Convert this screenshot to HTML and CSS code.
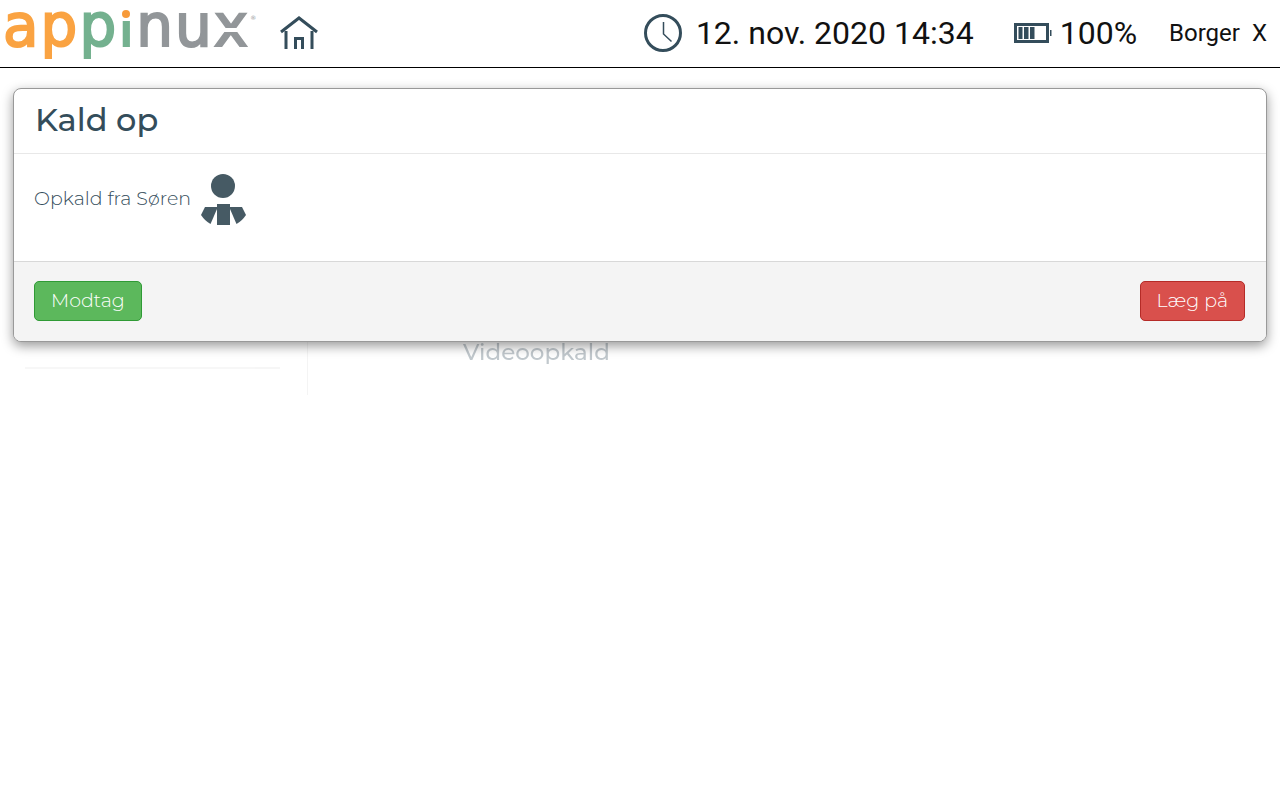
FILE: index.html
```html
<!DOCTYPE html>
<html lang="da">
<head>
  <meta charset="UTF-8">
  <meta name="viewport" content="width=device-width, initial-scale=1">
  <title>Appinux</title>
  <link rel="stylesheet" href="styles.css">
</head>
<body>
  <header class="topbar">
    <a class="logo" href="#"><span class="orange">a</span><span class="orange">p</span><span class="green">p</span><span class="dotted">i</span><span class="gray">n</span><span class="gray">u</span><span class="gray split">x</span><sup>®</sup></a>
    <a class="home" href="#" aria-label="Hjem">
      <svg width="38" height="34" viewBox="0 0 38 34" fill="none" stroke="#344d5b" stroke-width="3">
        <path d="M1 16 19 2l18 14"/>
        <path d="M6 15v18M32 15v18"/>
        <path d="M15.500 33V22.500h7V33"/>
      </svg>
    </a>

    <div class="status clock">
      <svg width="38" height="38" viewBox="0 0 38 38" fill="none" stroke="#344d5b">
        <circle cx="19" cy="19" r="17.500" stroke-width="3"/>
        <path d="M19.500 8v12l8 7.500" stroke-width="1.500"/>
      </svg>
      <time datetime="2020-11-12T14:34">12. nov. 2020 14:34</time>
    </div>

    <div class="status battery">
      <svg width="38" height="20" viewBox="0 0 38 20">
        <path d="M0 0h35v20H0zM3 3v14h29V3z" fill="#344d5b" fill-rule="evenodd"/>
        <path d="M4.500 4h4v12h-4zM10 4h4.500v12H10zM16 4h4.500v12H16zM36 7h1.500v6H36z" fill="#344d5b"/>
      </svg>
      <span>100%</span>
    </div>

    <div class="user">
      <span>Borger</span>
      <button class="logout" type="button" aria-label="Log ud">X</button>
    </div>
  </header>

  <main class="stage">
    <div class="page">
      <aside class="sidebar"><hr></aside>
      <section class="content">
        <h2>Videoopkald</h2>
      </section>
    </div>

    <div class="modal" role="dialog" aria-labelledby="callTitle">
      <div class="modal-header">
        <h1 id="callTitle">Kald op</h1>
      </div>
      <div class="modal-body">
        <span>Opkald fra Søren</span>
        <svg width="46" height="52" viewBox="0 0 46 52" fill="#465a64">
          <circle cx="22" cy="12" r="12"/>
          <path d="M16 30h13v21H16z"/>
          <path d="M4 33h12v2L9.500 50Q4 47 0 41z"/>
          <path d="M41 33H29v2l6.500 15Q41 47 45 41z"/>
        </svg>
      </div>
      <div class="modal-footer">
        <button class="btn btn-success" type="button">Modtag</button>
        <button class="btn btn-danger" type="button">Læg på</button>
      </div>
    </div>
  </main>
</body>
</html>
```

FILE: styles.css
```css
* {
  box-sizing: border-box;
}

body {
  margin: 0;
  background-color: #fff;
  color: #344d5b;
  font-family: Montserrat, Inter, sans-serif;
}

.topbar {
  display: flex;
  align-items: center;
  height: 68px;
  padding: 0 13px 2px 3px;
  border-bottom: 1px solid #000;
  color: #111;
  font-family: Roboto, sans-serif;
}

.topbar svg {
  display: block;
}

.logo {
  display: flex;
  gap: 2px;
  align-self: flex-start;
  font-family: "DejaVu Sans", sans-serif;
  font-size: 58px;
  line-height: 52px;
  text-decoration: none;
  -webkit-text-stroke: 2px;
}

.logo sup {
  color: #929699;
  font-size: 6px;
  line-height: 36px;
  -webkit-text-stroke: 0;
}

.orange {
  color: #faa342;
}

.green {
  color: #74b18f;
}

.gray {
  color: #929699;
}

/* the stem is green, the round orange dot is drawn on top */
.dotted {
  position: relative;
  background: linear-gradient(transparent 21px, #74b18f 21px);
  background-clip: text;
  -webkit-background-clip: text;
  color: transparent;
}

.dotted::before {
  content: "";
  position: absolute;
  top: 10px;
  left: 4px;
  width: 8px;
  height: 8px;
  border-radius: 50%;
  background-color: #f79a3a;
}

/* white bar that splits the x in two */
.split {
  position: relative;
}

.split::after {
  content: "";
  position: absolute;
  top: 28px;
  left: 0;
  right: 0;
  height: 4px;
  background-color: #fff;
}

.home {
  margin-left: 24px;
}

.status {
  display: flex;
  align-items: center;
  font-size: 32px;
}

.clock {
  gap: 14px;
  margin-left: auto;
}

.battery {
  gap: 8px;
  margin-left: 40px;
}

.user {
  display: flex;
  gap: 12px;
  margin-left: 32px;
  font-size: 24px;
}

.logout {
  padding: 0;
  border: none;
  background: none;
  color: inherit;
  font: inherit;
  cursor: pointer;
}

.stage {
  position: relative;
}

.page {
  display: flex;
  align-items: flex-end;
  height: 327px;
  opacity: 0.3;
}

.sidebar {
  display: flex;
  flex-direction: column;
  justify-content: flex-end;
  width: 308px;
  height: 300px;
  padding: 0 27px 26px 25px;
  border-right: 1px solid #ddd;
}

.sidebar hr {
  width: 100%;
  margin: 0;
  border: none;
  border-top: 2px solid #e4e4e4;
}

.content {
  padding: 0 0 27px 155px;
}

.content h2 {
  margin: 0;
  font-size: 23px;
  font-weight: 500;
  line-height: 32px;
}

.modal {
  position: absolute;
  top: 20px;
  left: 13px;
  right: 13px;
  border: 1px solid #999;
  border-radius: 8px;
  background-color: #fff;
  box-shadow: 0 4px 12px rgba(0, 0, 0, 0.4);
  overflow: hidden;
}

.modal-header {
  padding: 7px 21px 9px;
  border-bottom: 1px solid #e8e8e8;
}

.modal-header h1 {
  margin: 0;
  font-size: 32px;
  font-weight: 500;
  line-height: 48px;
}

.modal-body {
  display: flex;
  gap: 10px;
  height: 107px;
  padding: 20px;
  font-size: 19px;
  font-weight: 300;
  line-height: 50px;
}

.modal-footer {
  display: flex;
  justify-content: space-between;
  padding: 19px 21px 20px 20px;
  border-top: 1px solid #d8d8d8;
  background-color: #f4f4f4;
}

.btn {
  height: 40px;
  padding: 0 16px 2px;
  border: 1px solid;
  border-radius: 5px;
  color: #fff;
  font-family: inherit;
  font-size: 19px;
  font-weight: 300;
  cursor: pointer;
}

.btn-success {
  border-color: #2f9a35;
  background-color: #5cb85c;
}

.btn-danger {
  border-color: #b52b27;
  background-color: #d9504c;
}
```
